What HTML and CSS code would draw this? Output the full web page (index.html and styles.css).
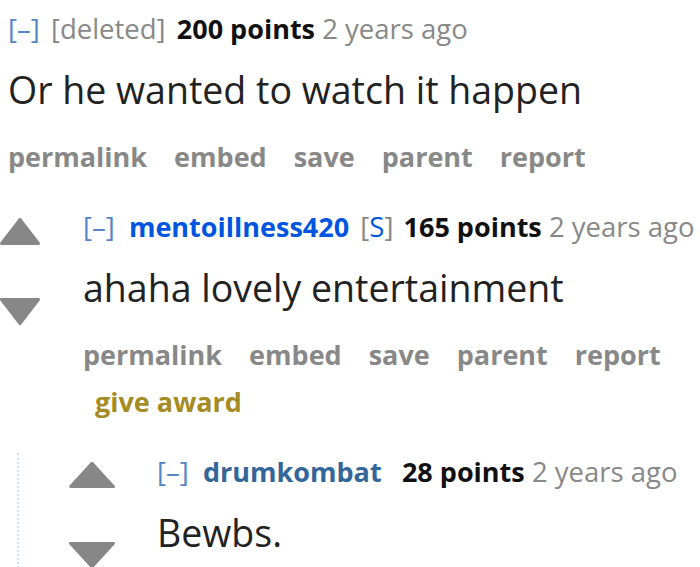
FILE: index.html
```html
<!DOCTYPE html>
<html lang="en">
<head>
    <meta charset="UTF-8">
    <meta name="viewport" content="width=device-width, initial-scale=1.0">
    <title>comments</title>
    <link rel="stylesheet" href="styles.css">
</head>
<body>
    <div class="commentarea">
        <!-- top comment (its vote arrows are outside the picture) -->
        <div class="comment">
            <div class="row first">
                <div class="entry">
                    <p class="tagline">
                        <a class="expand">[–]</a> <span class="deleted">[deleted]</span> <span class="score">200 points</span> <time>2 years ago</time>
                    </p>
                    <div class="md">Or he wanted to watch it happen</div>
                    <ul class="buttons">
                        <li>permalink</li>
                        <li>embed</li>
                        <li>save</li>
                        <li>parent</li>
                        <li>report</li>
                    </ul>
                </div>
            </div>

            <div class="child">
                <div class="comment">
                    <div class="row">
                        <div class="midcol">
                            <svg class="arrow up" viewBox="0 0 40 27" preserveAspectRatio="none"><path d="M20 1.5 L38.5 25.5 L1.5 25.5 Z"/></svg>
                            <svg class="arrow down" viewBox="0 0 40 27" preserveAspectRatio="none"><path d="M1.5 1.5 L38.5 1.5 L20 25.5 Z"/></svg>
                        </div>
                        <div class="entry">
                            <p class="tagline">
                                <a class="expand">[–]</a> <a class="author submitter">mentoillness420</a> <span class="userattrs">[<span class="op">S</span>]</span> <span class="score">165 points</span> <time>2 years ago</time>
                            </p>
                            <div class="md">ahaha lovely entertainment</div>
                            <ul class="buttons">
                                <li>permalink</li>
                                <li>embed</li>
                                <li>save</li>
                                <li>parent</li>
                                <li>report</li>
                                <li class="give-award">give award</li>
                            </ul>
                        </div>
                    </div>

                    <div class="child nested">
                        <div class="comment">
                            <div class="row">
                                <div class="midcol">
                                    <svg class="arrow up" viewBox="0 0 40 27" preserveAspectRatio="none"><path d="M20 1.5 L38.5 25.5 L1.5 25.5 Z"/></svg>
                                    <svg class="arrow down" viewBox="0 0 40 27" preserveAspectRatio="none"><path d="M1.5 1.5 L38.5 1.5 L20 25.5 Z"/></svg>
                                </div>
                                <div class="entry">
                                    <p class="tagline">
                                        <a class="expand">[–]</a> <a class="author">drumkombat</a> <span class="userattrs empty"></span> <span class="score">28 points</span> <time>2 years ago</time>
                                    </p>
                                    <div class="md">Bewbs.</div>
                                </div>
                            </div>
                        </div>
                    </div>
                </div>
            </div>
        </div>
    </div>
</body>
</html>
```

FILE: styles.css
```css
body{
    margin: 0;
    background: white;
    font-family: "Open Sans", "Noto Sans", sans-serif;
    overflow: hidden;
}

.commentarea{
    padding-top: 14px;
}

.row{
    display: flex;
}

.row.first{
    padding-left: 8px;
}

.midcol{
    width: 40px;
    margin-right: 43px;
    padding-top: 6px;
    display: flex;
    flex-direction: column;
    flex-shrink: 0;
}

.arrow{
    display: block;
    width: 40px;
    height: 27px;
}

.arrow path{
    fill: #878787;
    stroke: #878787;
    stroke-width: 3;
    stroke-linejoin: round;
}

.arrow.down{
    margin-top: 53px;
}

.entry{
    flex: 1;
    min-width: 0;
}

.tagline{
    margin: 0;
    font-size: 27.5px;
    line-height: 30px;
    color: #888;
    white-space: nowrap;
}

.expand{
    color: #5586c8;
    margin-right: 4px;
}

.deleted{
    color: #888;
    margin-right: 4px;
}

.author{
    font-size: 27px;
    font-weight: bold;
    color: #369;
    margin-left: 3px;
    margin-right: 4px;
}

.author.submitter{
    color: #0055df;
}

.userattrs{
    color: #888;
    margin-right: 3px;
}

.userattrs .op{
    color: #0055df;
}

.userattrs.empty{
    display: inline-block;
    width: 2px;
    margin-right: 0;
}

.score{
    font-size: 27px;
    font-weight: bold;
    color: #111;
}

time{
    color: #888;
}

.md{
    margin-top: 24px;
    font-size: 37.5px;
    line-height: 44px;
    color: #222;
    white-space: nowrap;
}

.buttons{
    margin: 21px 0 0;
    padding: 0;
    list-style: none;
    display: flex;
    flex-wrap: wrap;
    column-gap: 27px;
    font-size: 27px;
    line-height: 47px;
    font-weight: bold;
    color: #888;
}

.buttons .give-award{
    color: #a58b25;
    margin-left: 12px;
}

.child{
    margin-top: 32px;
}

/* 안쪽 댓글: 점선 테두리 */
.child.nested{
    margin-top: 28px;
    margin-left: 17px;
    padding-top: 4px;
    padding-left: 50px;
    border-left: 2px dotted #d4dbf6;
}

.nested .midcol{
    width: 46px;
    margin-right: 42px;
    padding-top: 5px;
}

.nested .arrow{
    width: 46px;
    height: 26px;
}

.nested .arrow.down{
    margin-top: 54px;
}
```
